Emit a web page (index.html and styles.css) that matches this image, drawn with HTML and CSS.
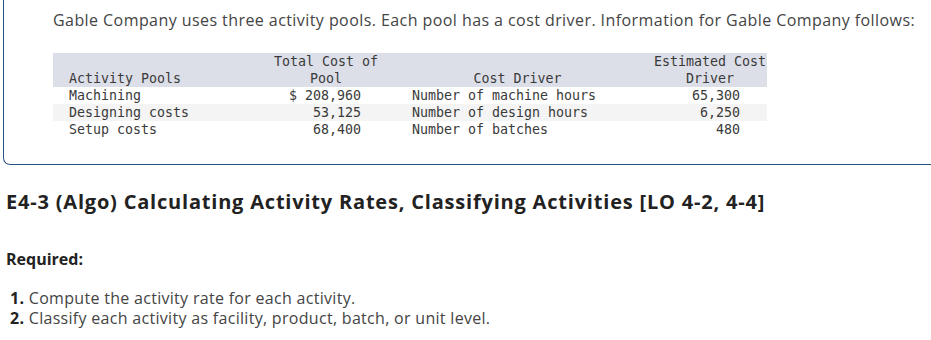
FILE: index.html
```html
<!DOCTYPE html>
<html>
<head>
<meta charset="utf-8">
<link rel="stylesheet" href="styles.css">
</head>
<body>
<div class="card">
  <p class="intro">Gable Company uses three activity pools. Each pool has a cost driver. Information for Gable Company follows:</p>
  <table class="data">
    <thead>
      <tr>
        <th class="c1">Activity Pools</th>
        <th class="c2">Total Cost of<br>Pool</th>
        <th class="c3">Cost Driver</th>
        <th class="c4">Estimated Cost<br>Driver</th>
      </tr>
    </thead>
    <tbody>
      <tr>
        <td class="c1">Machining</td>
        <td class="c2">$ 208,960</td>
        <td class="c3">Number of machine hours</td>
        <td class="c4">65,300</td>
      </tr>
      <tr class="alt">
        <td class="c1">Designing costs</td>
        <td class="c2">53,125</td>
        <td class="c3">Number of design hours</td>
        <td class="c4">6,250</td>
      </tr>
      <tr>
        <td class="c1">Setup costs</td>
        <td class="c2">68,400</td>
        <td class="c3">Number of batches</td>
        <td class="c4">480</td>
      </tr>
    </tbody>
  </table>
</div>
<h2 class="title">E4-3 (Algo) Calculating Activity Rates, Classifying Activities [LO 4-2, 4-4]</h2>
<p class="required">Required:</p>
<ol class="tasks">
  <li><b>1.</b> Compute the activity rate for each activity.</li>
  <li><b>2.</b> Classify each activity as facility, product, batch, or unit level.</li>
</ol>
</body>
</html>
```
FILE: styles.css
```css
html, body {
  margin: 0;
  padding: 0;
  background: #ffffff;
}
body {
  font-family: "Open Sans", Lato, sans-serif;
  color: #3a3a3a;
}
.card {
  margin-left: 3px;
  border-left: 1px solid #2c5282;
  border-bottom: 1px solid #2c5282;
  border-bottom-left-radius: 7px;
  height: 165px;
  box-sizing: border-box;
  padding: 10px 0 0 49px;
}
.intro {
  margin: 0;
  font-size: 16px;
  line-height: 20px;
  letter-spacing: 0.43px;
  color: #444;
  white-space: nowrap;
}
.data {
  margin-top: 23px;
  border-collapse: collapse;
  table-layout: fixed;
  width: 714px;
  font-family: "DejaVu Sans Mono", monospace;
  font-size: 13.3px;
  line-height: 17px;
  color: #3a3a3a;
}
.data th {
  background: #dcdfe8;
  font-weight: normal;
  vertical-align: bottom;
  padding: 0;
  text-align: center;
}
.data td {
  padding: 0;
  height: 17px;
  white-space: nowrap;
}
.data .alt td {
  background: #f4f4f4;
}
.data th.c1 { width: 201px; padding-left: 16px; text-align: left; }
.data td.c1 { padding-left: 16px; text-align: left; }
.data th.c2 { width: 112px; }
.data td.c2 { text-align: right; padding-right: 21px; }
.data th.c3 { width: 271px; }
.data td.c3 { text-align: left; padding-left: 30px; }
.data th.c4 { width: 114px; }
.data td.c4 { text-align: right; padding-right: 27px; }
.title {
  margin: 24px 0 0 6px;
  font-size: 20px;
  line-height: 26px;
  font-weight: 700;
  letter-spacing: 0.8px;
  color: #222;
  white-space: nowrap;
}
.required {
  margin: 34px 0 0 6px;
  font-size: 16px;
  line-height: 20px;
  font-weight: 700;
  color: #222;
}
.tasks {
  list-style: none;
  margin: 19px 0 0 10px;
  padding: 0;
  font-size: 16px;
  line-height: 20px;
  letter-spacing: 0.3px;
  color: #444;
}
.tasks li {
  line-height: 20px;
}
.tasks b {
  font-weight: 700;
  color: #222;
}
```
